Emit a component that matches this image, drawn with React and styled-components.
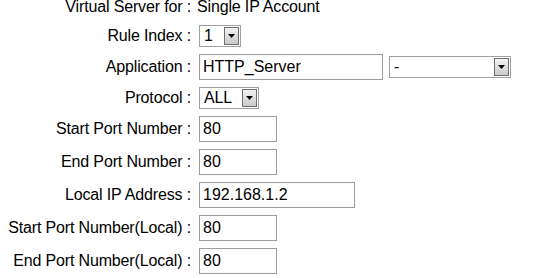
import React from 'react';
import styled, { createGlobalStyle } from 'styled-components';

const GlobalStyle = createGlobalStyle`
  html, body { margin: 0; padding: 0; background: #fff; }
  body {
    font-family: "Liberation Sans", Arial, sans-serif;
    font-size: 16px;
    color: #000;
  }
`;

const Page = styled.div`
  padding: 0 0 0 8px;
`;

const Form = styled.div`
  display: grid;
  grid-template-columns: 183px max-content;
  column-gap: 6px;
  row-gap: 7px;
  align-items: center;
`;

const Label = styled.div`
  display: flex;
  justify-content: flex-end;
  white-space: nowrap;
  letter-spacing: -0.15px;
  line-height: ${(p) => (p.$first ? 14 : 18)}px;
  margin-bottom: ${(p) => (p.$first ? 4 : 0)}px;
`;

const Value = styled.div`
  display: flex;
  align-items: center;
  gap: 6px;
  line-height: ${(p) => (p.$first ? 14 : 18)}px;
  margin-bottom: ${(p) => (p.$first ? 4 : 0)}px;
  letter-spacing: -0.15px;
  white-space: nowrap;
`;

const TextInput = styled.input`
  box-sizing: border-box;
  width: ${(p) => p.$w}px;
  height: 26px;
  margin: 0 0 0 2px;
  padding: 0 3px;
  border: 1px solid #9c9c9c;
  font-family: inherit;
  font-size: 16px;
  color: #000;
  background: #fff;
  outline: none;
`;

const Select = styled.div`
  box-sizing: border-box;
  width: ${(p) => p.$w}px;
  height: 22px;
  margin-left: ${(p) => (p.$ml === undefined ? 2 : p.$ml)}px;
  display: flex;
  align-items: center;
  border: 1px solid #a0a0a0;
  padding: 1px;
  background: #fff;
`;

const SelectText = styled.span`
  flex: 1;
  padding-left: 3px;
  line-height: 18px;
  white-space: nowrap;
`;

const ArrowBtn = styled.span`
  box-sizing: border-box;
  width: 15px;
  height: 18px;
  border: 1px solid #6f6f6f;
  background: linear-gradient(#f2f2f2, #cbcbcb);
  display: flex;
  align-items: center;
  justify-content: center;
`;

const Arrow = () => (
  <svg width="7" height="4" viewBox="0 0 7 4">
    <polygon points="0,0 7,0 3.5,4" fill="#000" />
  </svg>
);

const Dropdown = ({ w, ml, value }) => (
  <Select $w={w} $ml={ml}>
    <SelectText>{value}</SelectText>
    <ArrowBtn>
      <Arrow />
    </ArrowBtn>
  </Select>
);

export default function App() {
  return (
    <>
      <GlobalStyle />
      <Page>
        <Form>
          <Label $first>Virtual Server for :</Label>
          <Value $first>Single IP Account</Value>

          <Label>Rule Index :</Label>
          <Value>
            <Dropdown w={42} value="1" />
          </Value>

          <Label>Application :</Label>
          <Value>
            <TextInput $w={184} defaultValue="HTTP_Server" />
            <Dropdown w={122} ml={0} value="-" />
          </Value>

          <Label>Protocol :</Label>
          <Value>
            <Dropdown w={60} value="ALL" />
          </Value>

          <Label>Start Port Number :</Label>
          <Value>
            <TextInput $w={78} defaultValue="80" />
          </Value>

          <Label>End Port Number :</Label>
          <Value>
            <TextInput $w={78} defaultValue="80" />
          </Value>

          <Label>Local IP Address :</Label>
          <Value>
            <TextInput $w={156} defaultValue="192.168.1.2" />
          </Value>

          <Label>Start Port Number(Local) :</Label>
          <Value>
            <TextInput $w={78} defaultValue="80" />
          </Value>

          <Label>End Port Number(Local) :</Label>
          <Value>
            <TextInput $w={78} defaultValue="80" />
          </Value>
        </Form>
      </Page>
    </>
  );
}
